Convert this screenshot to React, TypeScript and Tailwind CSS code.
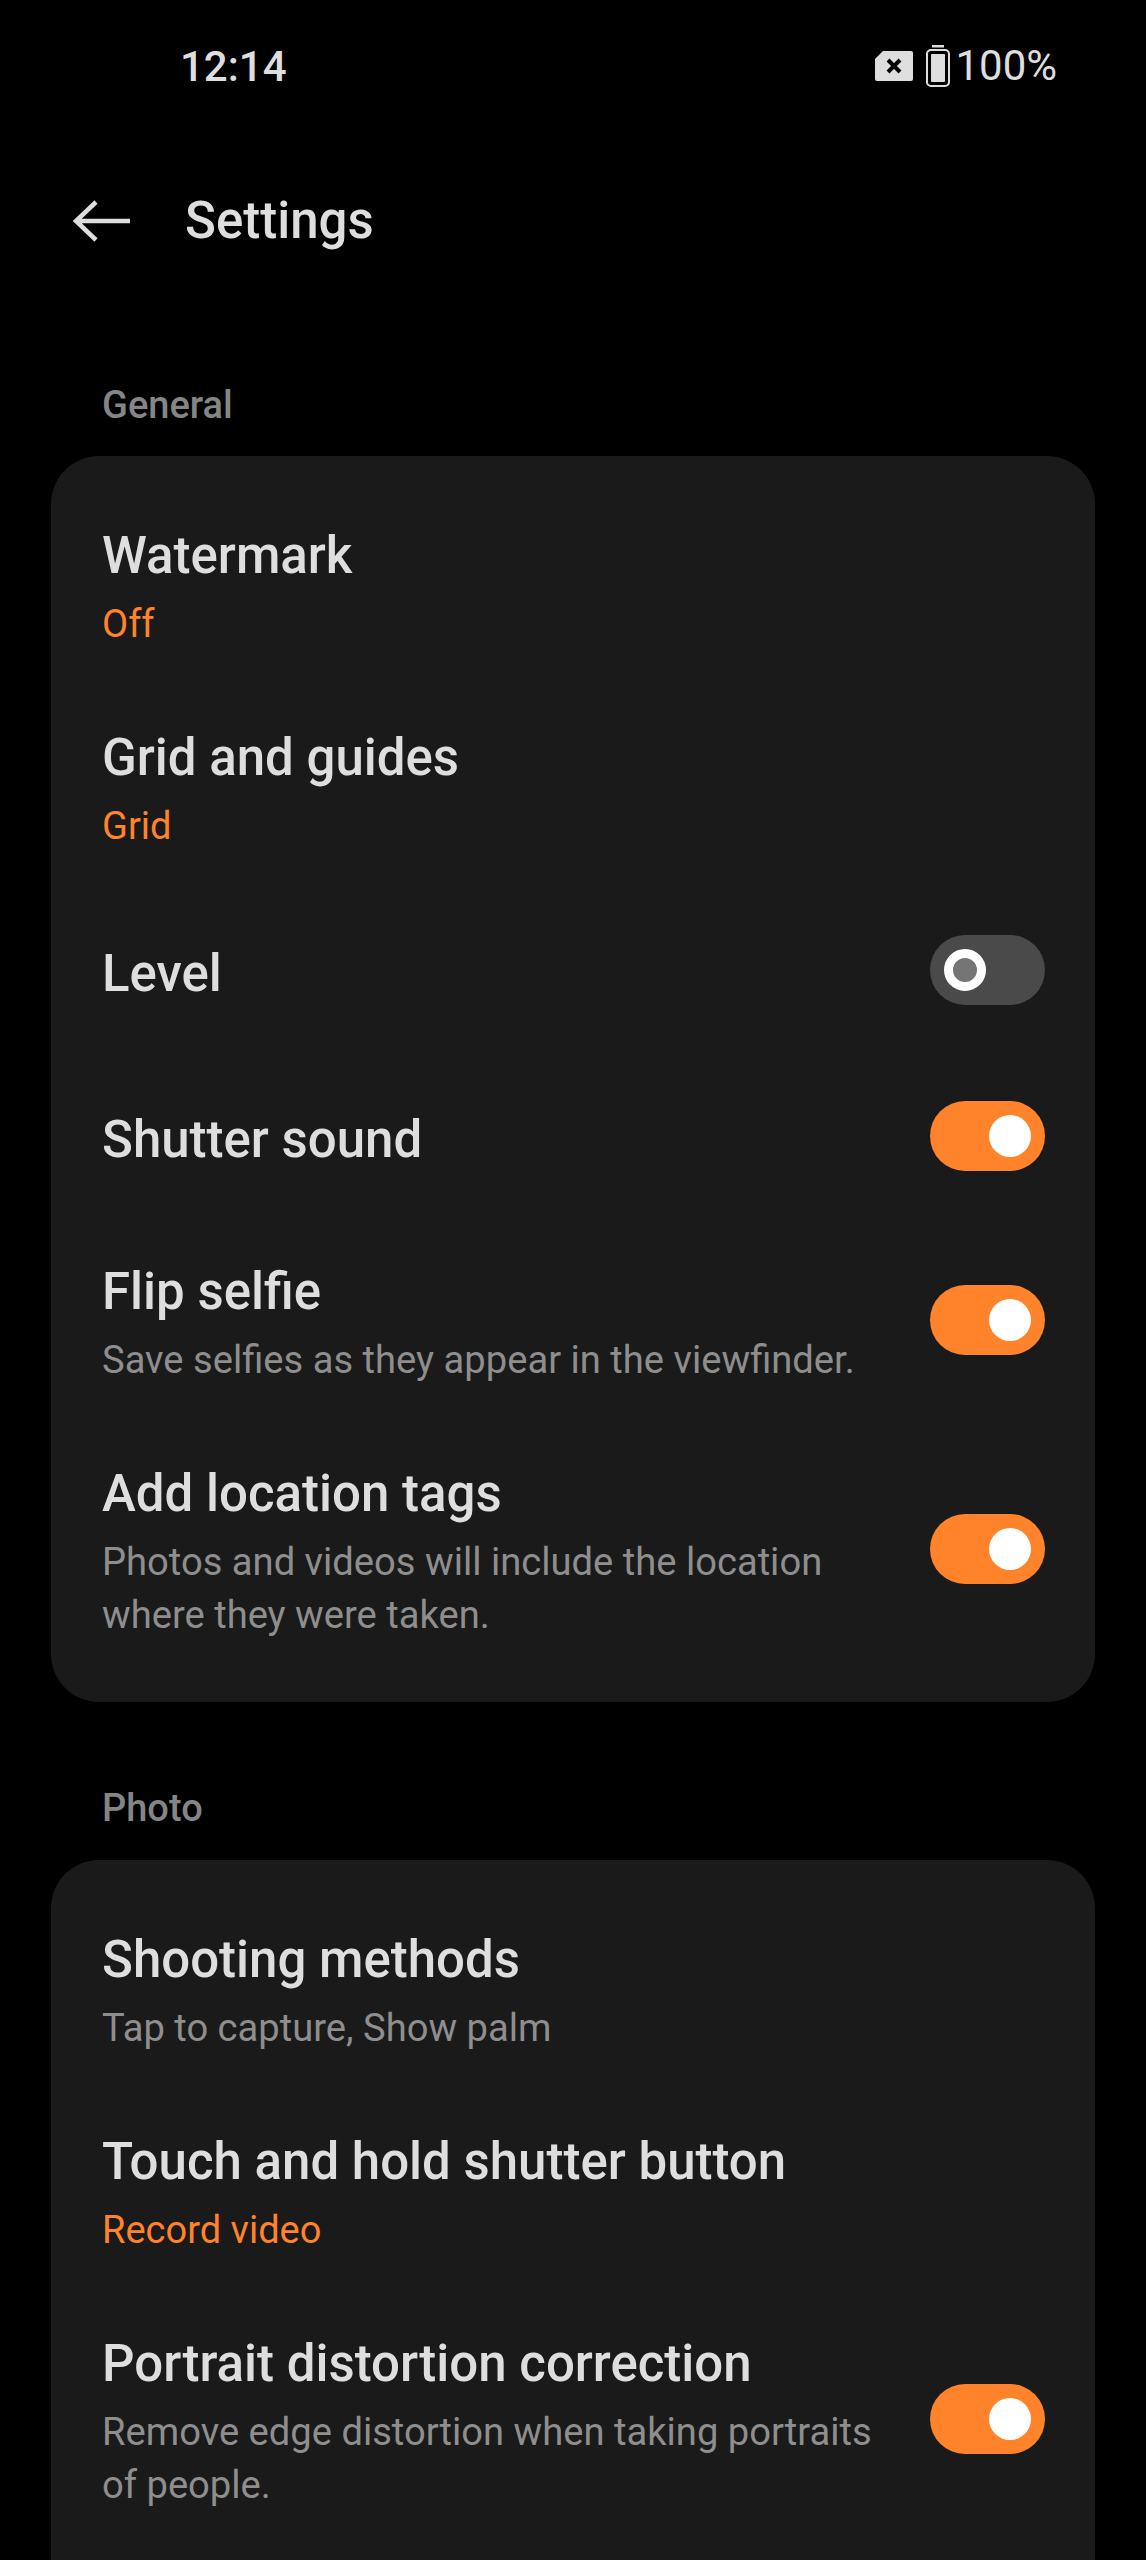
import React from "react";

type RowProps = {
  title: string;
  value?: string;
  desc?: string[];
  toggle?: "on" | "off";
};

function Toggle({ on }: { on: boolean }) {
  if (on) {
    return (
      <div className="mb-[6px] flex h-[70px] w-[115px] shrink-0 items-center justify-end rounded-full bg-[#ff832b] pr-[14px]">
        <div className="h-[42px] w-[42px] rounded-full bg-white" />
      </div>
    );
  }
  return (
    <div className="mb-[6px] flex h-[70px] w-[115px] shrink-0 items-center rounded-full bg-[#4a4a4a] pl-[14px]">
      <div className="h-[42px] w-[42px] rounded-full border-[9px] border-white bg-[#757575]" />
    </div>
  );
}

function Row({ title, value, desc, toggle }: RowProps) {
  const single = !value && !desc;
  return (
    <div
      className={
        single
          ? "flex min-h-[166px] items-center justify-between pl-[51px] pr-[50px]"
          : "flex items-center justify-between py-[37px] pl-[51px] pr-[50px]"
      }
    >
      <div className="min-w-0">
        <div className="text-[51px] font-medium leading-[65px] text-[#dedede]">{title}</div>
        {value && <div className="mt-[10px] text-[38px] leading-[53px] text-[#ff832b]">{value}</div>}
        {desc && (
          <div className="mt-[10px] text-[38.15px] leading-[53px] text-[#8e8e8e]">
            {desc.map((line) => (
              <div key={line}>{line}</div>
            ))}
          </div>
        )}
      </div>
      {toggle && <Toggle on={toggle === "on"} />}
    </div>
  );
}

function StatusBar() {
  return (
    <div className="flex h-[132px] items-center justify-between pl-[180px] pr-[89px] text-[#dedede]">
      <span className="text-[42px] font-medium">12:14</span>
      <div className="flex items-center">
        {/* sim with x */}
        <svg width="40" height="32" viewBox="0 0 40 32" className="mr-[12px]">
          <path d="M9 1h28a2 2 0 0 1 2 2v26a2 2 0 0 1-2 2H3a2 2 0 0 1-2-2V9z" fill="#dedede" />
          <path d="M14 10l12 12M26 10L14 22" stroke="#000" strokeWidth="4" />
        </svg>
        {/* battery */}
        <svg width="24" height="42" viewBox="0 0 24 42" className="mr-[5px]">
          <rect x="6" y="0" width="12" height="2.5" fill="#dedede" />
          <rect x="1" y="5" width="22" height="36" rx="4" fill="none" stroke="#dedede" strokeWidth="2" />
          <rect x="5" y="9" width="14" height="28" rx="1" fill="#dedede" />
        </svg>
        <span className="text-[42px] leading-none">100%</span>
      </div>
    </div>
  );
}

export default function App() {
  return (
    <div className="h-[2560px] w-[1146px] overflow-hidden bg-black font-['Roboto',sans-serif]">
      <StatusBar />
      <div className="flex h-[178px] items-center pl-[72px]">
        <svg width="60" height="44" viewBox="0 0 60 44" fill="none" stroke="#dedede" strokeWidth="4.5">
          <path d="M58 22H5M24 3L4 22l20 19" />
        </svg>
        <span className="ml-[53px] text-[51px] font-medium text-[#dedede]">Settings</span>
      </div>

      <div className="mt-[69px] pl-[102px] text-[38px] font-medium leading-[52px] text-[#858585]">General</div>
      <div className="mx-[51px] mt-[25px] rounded-[48px] bg-[#1a1a1a] pb-[23px] pt-[30px]">
        <Row title="Watermark" value="Off" />
        <Row title="Grid and guides" value="Grid" />
        <Row title="Level" toggle="off" />
        <Row title="Shutter sound" toggle="on" />
        <Row title="Flip selfie" desc={["Save selfies as they appear in the viewfinder."]} toggle="on" />
        <Row
          title="Add location tags"
          desc={["Photos and videos will include the location", "where they were taken."]}
          toggle="on"
        />
      </div>

      <div className="mt-[80px] pl-[102px] text-[38px] font-medium leading-[52px] text-[#858585]">Photo</div>
      <div className="mx-[51px] mt-[26px] rounded-[48px] bg-[#1a1a1a] pb-[80px] pt-[30px]">
        <Row title="Shooting methods" desc={["Tap to capture, Show palm"]} />
        <Row title="Touch and hold shutter button" value="Record video" />
        <Row
          title="Portrait distortion correction"
          desc={["Remove edge distortion when taking portraits", "of people."]}
          toggle="on"
        />
      </div>
    </div>
  );
}
